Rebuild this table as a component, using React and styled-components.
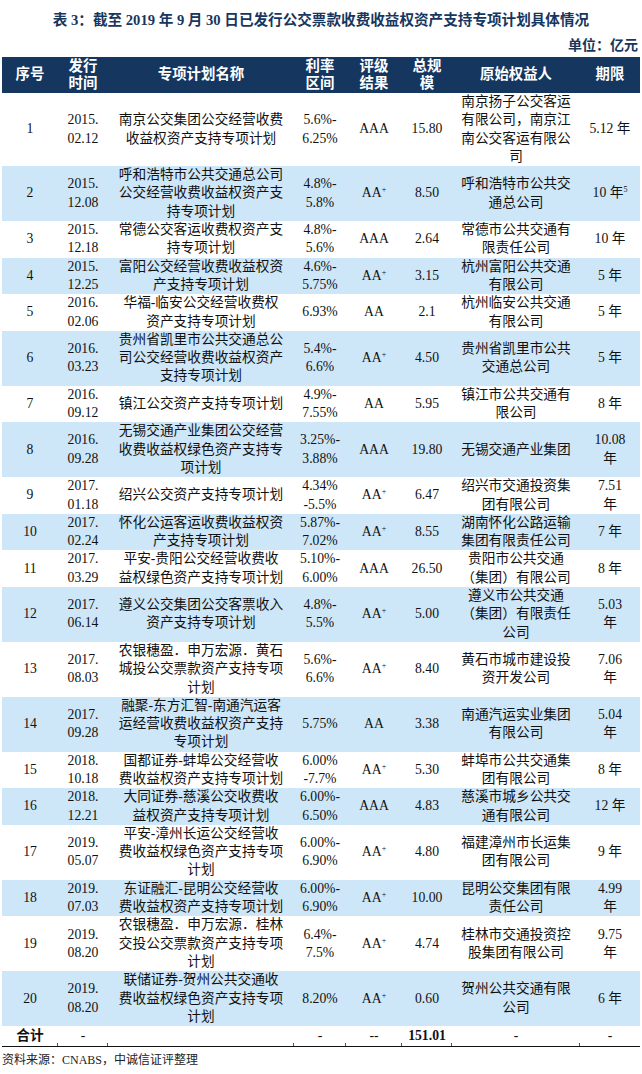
import React from "react";
import styled, { createGlobalStyle } from "styled-components";

const GlobalStyle = createGlobalStyle`
  html, body { margin: 0; padding: 0; background: #ffffff; }
  body { font-family: "Liberation Serif", "Noto Sans CJK SC", serif; color: #111; }
`;

const COLS = "56px 50px 186px 52px 56px 50px 128px 60px";

const Page = styled.div`
  width: 642px;
  padding: 10px 2px 0;
  box-sizing: border-box;
`;

const Title = styled.h1`
  margin: 0;
  text-align: center;
  font-size: 14.6px;
  line-height: 20px;
  font-weight: 700;
  color: #17365d;
  font-family: "Liberation Serif", "Noto Sans CJK SC", serif;
`;

const Unit = styled.div`
  margin-top: 6px;
  text-align: right;
  font-size: 14px;
  line-height: 20px;
  font-weight: 700;
  color: #17365d;
  padding-right: 2px;
`;

const Table = styled.div`
  margin-top: 1px;
  display: flex;
  flex-direction: column;
`;

const HeadRow = styled.div`
  display: grid;
  grid-template-columns: ${COLS};
  background: #14365f;
  color: #ffffff;
  min-height: 36px;
`;

const HeadCell = styled.div`
  display: flex;
  align-items: center;
  justify-content: center;
  text-align: center;
  font-size: 14.4px;
  line-height: 17.5px;
  font-weight: 700;
  font-family: "Liberation Serif", "Noto Sans CJK SC", serif;
`;

const Row = styled.div`
  display: grid;
  grid-template-columns: ${COLS};
  background: ${(p) => (p.$alt ? "#cde6f8" : "#ffffff")};
`;

const Cell = styled.div`
  display: flex;
  flex-direction: column;
  align-items: center;
  justify-content: center;
  text-align: center;
  font-size: 13.7px;
  line-height: 18.3px;
  white-space: nowrap;
  font-weight: ${(p) => (p.$bold ? 700 : 400)};
`;

const Line = styled.span`
  display: block;
`;

const Sup = styled.sup`
  font-size: 8px;
  line-height: 0;
  vertical-align: 5px;
`;

const TotalRow = styled.div`
  display: grid;
  grid-template-columns: ${COLS};
  border-bottom: 1.5px solid #111;
  height: 20px;
`;

const TotalCell = styled.div`
  position: relative;
  display: flex;
  align-items: center;
  justify-content: center;
  font-size: 13.7px;
  line-height: 20px;
  font-weight: ${(p) => (p.$bold ? 700 : 400)};
  &::after {
    content: "";
    position: absolute;
    right: 0;
    bottom: 0;
    width: 1px;
    height: 3px;
    background: #555;
    display: ${(p) => (p.$last ? "none" : "block")};
  }
`;

const Source = styled.div`
  margin-top: 4px;
  font-size: 12px;
  line-height: 18px;
  color: #222;
  font-family: "Liberation Serif", "Noto Sans CJK SC", serif;
`;

const AAp = () => (
  <>
    AA<Sup>+</Sup>
  </>
);

const rows = [
  ["1", ["2015.", "02.12"], ["南京公交集团公交经营收费", "收益权资产支持专项计划"], ["5.6%-", "6.25%"], "AAA", "15.80", ["南京扬子公交客运", "有限公司，南京江", "南公交客运有限公", "司"], ["5.12 年"]],
  ["2", ["2015.", "12.08"], ["呼和浩特市公共交通总公司", "公交经营收费收益权资产支", "持专项计划"], ["4.8%-", "5.8%"], "AA+", "8.50", ["呼和浩特市公共交", "通总公司"], ["10 年^5"]],
  ["3", ["2015.", "12.18"], ["常德公交客运收费权资产支", "持专项计划"], ["4.8%-", "5.6%"], "AAA", "2.64", ["常德市公共交通有", "限责任公司"], ["10 年"]],
  ["4", ["2015.", "12.25"], ["富阳公交经营收费收益权资", "产支持专项计划"], ["4.6%-", "5.75%"], "AA+", "3.15", ["杭州富阳公共交通", "有限公司"], ["5 年"]],
  ["5", ["2016.", "02.06"], ["华福-临安公交经营收费权", "资产支持专项计划"], ["6.93%"], "AA", "2.1", ["杭州临安公共交通", "有限公司"], ["5 年"]],
  ["6", ["2016.", "03.23"], ["贵州省凯里市公共交通总公", "司公交经营收费收益权资产", "支持专项计划"], ["5.4%-", "6.6%"], "AA+", "4.50", ["贵州省凯里市公共", "交通总公司"], ["5 年"]],
  ["7", ["2016.", "09.12"], ["镇江公交资产支持专项计划"], ["4.9%-", "7.55%"], "AA", "5.95", ["镇江市公共交通有", "限公司"], ["8 年"]],
  ["8", ["2016.", "09.28"], ["无锡交通产业集团公交经营", "收费收益权绿色资产支持专", "项计划"], ["3.25%-", "3.88%"], "AAA", "19.80", ["无锡交通产业集团"], ["10.08", "年"]],
  ["9", ["2017.", "01.18"], ["绍兴公交资产支持专项计划"], ["4.34%", "-5.5%"], "AA+", "6.47", ["绍兴市交通投资集", "团有限公司"], ["7.51", "年"]],
  ["10", ["2017.", "02.24"], ["怀化公运客运收费收益权资", "产支持专项计划"], ["5.87%-", "7.02%"], "AA+", "8.55", ["湖南怀化公路运输", "集团有限责任公司"], ["7 年"]],
  ["11", ["2017.", "03.29"], ["平安-贵阳公交经营收费收", "益权绿色资产支持专项计划"], ["5.10%-", "6.00%"], "AAA", "26.50", ["贵阳市公共交通", "（集团）有限公司"], ["8 年"]],
  ["12", ["2017.", "06.14"], ["遵义公交集团公交客票收入", "资产支持专项计划"], ["4.8%-", "5.5%"], "AA+", "5.00", ["遵义市公共交通", "（集团）有限责任", "公司"], ["5.03", "年"]],
  ["13", ["2017.", "08.03"], ["农银穗盈．申万宏源．黄石", "城投公交票款资产支持专项", "计划"], ["5.6%-", "6.6%"], "AA+", "8.40", ["黄石市城市建设投", "资开发公司"], ["7.06", "年"]],
  ["14", ["2017.", "09.28"], ["融聚-东方汇智-南通汽运客", "运经营收费收益权资产支持", "专项计划"], ["5.75%"], "AA", "3.38", ["南通汽运实业集团", "有限公司"], ["5.04", "年"]],
  ["15", ["2018.", "10.18"], ["国都证券-蚌埠公交经营收", "费收益权资产支持专项计划"], ["6.00%", "-7.7%"], "AA+", "5.30", ["蚌埠市公共交通集", "团有限公司"], ["8 年"]],
  ["16", ["2018.", "12.21"], ["大同证券-慈溪公交收费收", "益权资产支持专项计划"], ["6.00%-", "6.50%"], "AAA", "4.83", ["慈溪市城乡公共交", "通有限公司"], ["12 年"]],
  ["17", ["2019.", "05.07"], ["平安-漳州长运公交经营收", "费收益权绿色资产支持专项", "计划"], ["6.00%-", "6.90%"], "AA+", "4.80", ["福建漳州市长运集", "团有限公司"], ["9 年"]],
  ["18", ["2019.", "07.03"], ["东证融汇-昆明公交经营收", "费收益权资产支持专项计划"], ["6.00%-", "6.90%"], "AA+", "10.00", ["昆明公交集团有限", "责任公司"], ["4.99", "年"]],
  ["19", ["2019.", "08.20"], ["农银穗盈．申万宏源．桂林", "交投公交票款资产支持专项", "计划"], ["6.4%-", "7.5%"], "AA+", "4.74", ["桂林市交通投资控", "股集团有限公司"], ["9.75", "年"]],
  ["20", ["2019.", "08.20"], ["联储证券-贺州公共交通收", "费收益权绿色资产支持专项", "计划"], ["8.20%"], "AA+", "0.60", ["贺州公共交通有限", "公司"], ["6 年"]],
];

const renderText = (t) => {
  if (t === "AA+") return <AAp />;
  if (t.includes("^")) {
    const [a, b] = t.split("^");
    return (
      <>
        {a}
        <Sup>{b}</Sup>
      </>
    );
  }
  return t;
};

const Lines = ({ items }) =>
  (Array.isArray(items) ? items : [items]).map((t, i) => <Line key={i}>{renderText(t)}</Line>);

const headers = [["序号"], ["发行", "时间"], ["专项计划名称"], ["利率", "区间"], ["评级", "结果"], ["总规", "模"], ["原始权益人"], ["期限"]];

const totals = [
  { t: "合计", bold: true },
  { t: "-" },
  { t: "" },
  { t: "-" },
  { t: "--" },
  { t: "151.01", bold: true },
  { t: "-" },
  { t: "-" },
];

export default function App() {
  return (
    <Page>
      <GlobalStyle />
      <Title>表 3：截至 2019 年 9 月 30 日已发行公交票款收费收益权资产支持专项计划具体情况</Title>
      <Unit>单位：亿元</Unit>
      <Table>
        <HeadRow>
          {headers.map((h, i) => (
            <HeadCell key={i}>
              <div>
                {h.map((l, j) => (
                  <Line key={j}>{l}</Line>
                ))}
              </div>
            </HeadCell>
          ))}
        </HeadRow>
        {rows.map((r, i) => (
          <Row key={i} $alt={i % 2 === 1}>
            {r.map((c, j) => (
              <Cell key={j}>
                <Lines items={c} />
              </Cell>
            ))}
          </Row>
        ))}
        <TotalRow>
          {totals.map((c, i) => (
            <TotalCell key={i} $bold={c.bold} $last={i === totals.length - 1}>
              {c.t}
            </TotalCell>
          ))}
        </TotalRow>
      </Table>
      <Source>资料来源：CNABS，中诚信证评整理</Source>
    </Page>
  );
}
